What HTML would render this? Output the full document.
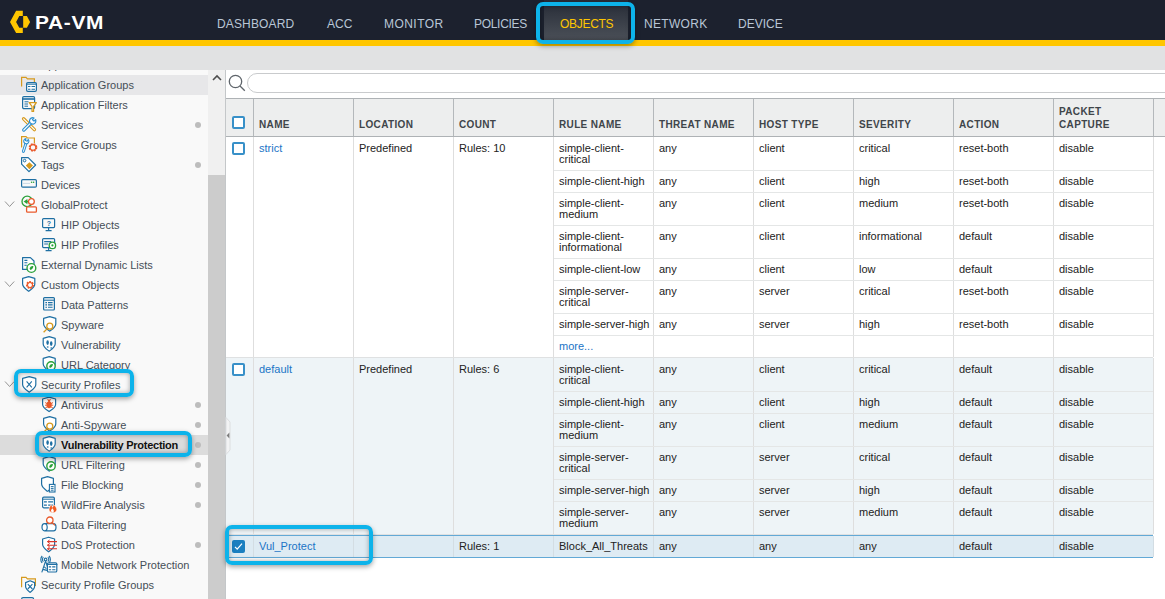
<!DOCTYPE html><html><head><meta charset="utf-8"><style>
*{margin:0;padding:0;box-sizing:border-box}
html,body{width:1165px;height:599px;overflow:hidden;background:#fff;font-family:"Liberation Sans",sans-serif}
.abs{position:absolute}
#hdr{position:absolute;left:0;top:0;width:1165px;height:40px;background:#1c212e}
#ybar{position:absolute;left:0;top:40px;width:1165px;height:6px;background:#ffc600}
#gbar{position:absolute;left:0;top:46px;width:1165px;height:24px;background:#e1e2e3}
.nav{position:absolute;top:17px;font-size:12px;color:#b9c6d6;line-height:14px;white-space:nowrap}
#side{position:absolute;left:0;top:70px;width:208px;height:529px;background:#f9f9f9;overflow:hidden}
.si{position:absolute;left:0;width:208px;height:20px;font-size:11px;color:#454e57;line-height:20px;white-space:nowrap}
.si .t{position:absolute;top:0}
.si svg{position:absolute;top:0;left:0}
.dot{position:absolute;left:195px;top:7px;width:6px;height:6px;border-radius:50%;background:#bdbdbd}
.si .chev{position:absolute;left:4px;top:5px}
#strack{position:absolute;left:208px;top:70px;width:17px;height:529px;background:#f0f0f0}
#sthumb{position:absolute;left:208px;top:175px;width:17px;height:424px;background:#cccccc}
#main{position:absolute;left:225px;top:70px;width:940px;height:529px;background:#fff;border-left:1px solid #c8c8c8}
.cell{position:absolute;font-size:11px;line-height:10.5px;color:#222;white-space:nowrap}
.hd{position:absolute;font-size:10px;font-weight:bold;color:#40454a;line-height:13px;letter-spacing:0.35px;white-space:nowrap}
.lnk{color:#1b74c6}
.vl{position:absolute;width:1px;background:#dedede}
.hl{position:absolute;height:1px;background:#e4e6e6}
.cb{position:absolute;width:13px;height:13px;border:2px solid #3890c8;border-radius:2px;background:#fff}
.hbox{position:absolute;border:4px solid #0db3ea;border-radius:7px;box-shadow:0 2px 5px rgba(0,0,0,.35), inset 0 0 5px rgba(0,0,0,.35)}
</style></head><body>

<div id="hdr"></div><div id="ybar"></div><div id="gbar"></div>
<svg class="abs" style="left:0;top:0" width="40" height="40" viewBox="0 0 40 40">
<path fill="#ffc600" d="M16.1,10.8 L22.8,10.8 L22.8,16.1 L19.3,16.1 L16.1,21.9 L19.3,27.8 L22.8,27.8 L22.8,33 L16.1,33 L10,21.9 Z"/>
<path fill="#ffc600" d="M23.2,16.1 L26.9,16.1 L30.1,21.9 L26.9,27.8 L23.2,27.8 Z"/>
</svg>
<div class="abs" style="left:35px;top:12px;font-size:19px;font-weight:bold;color:#fff;line-height:22px;letter-spacing:0.6px;white-space:nowrap;transform:scaleX(1.1);transform-origin:0 0">PA-VM</div>
<div class="abs" style="left:544px;top:0;width:84px;height:40px;background:linear-gradient(#262b36,#4b5058)"></div>
<div class="nav" style="left:217px;color:#b9c6d6;letter-spacing:0.15px">DASHBOARD</div>
<div class="nav" style="left:327px;color:#b9c6d6;letter-spacing:0px">ACC</div>
<div class="nav" style="left:384px;color:#b9c6d6;letter-spacing:0.45px">MONITOR</div>
<div class="nav" style="left:474px;color:#b9c6d6;letter-spacing:-0.3px">POLICIES</div>
<div class="nav" style="left:560px;color:#ffc600;letter-spacing:-0.3px">OBJECTS</div>
<div class="nav" style="left:644px;color:#b9c6d6;letter-spacing:0.3px">NETWORK</div>
<div class="nav" style="left:738px;color:#b9c6d6;letter-spacing:0px">DEVICE</div>
<div class="hbox" style="left:536px;top:2px;width:99px;height:42px"></div>
<div id="side">
<div class="si" style="top:-15px;">
<span style="position:absolute;left:20px;top:0px;width:18px;height:20px;line-height:0"><svg width="18" height="20" viewBox="0 0 18 20"><rect x="1.6" y="2" width="14.8" height="12.2" rx="1.5" fill="none" stroke="#1e6fa3" stroke-width="1.2"/></svg></span>
<span class="t" style="left:41px;">Application</span>
</div>
<div class="si" style="top:5px;background:#e7e7e9;">
<span style="position:absolute;left:20px;top:0px;width:18px;height:20px;line-height:0"><svg width="18" height="20" viewBox="0 0 18 20"><path d="M1.6,11.5 V2.4 H6 L7.4,3.8 H14.4 V7" fill="none" stroke="#d69a1e" stroke-width="1.2"/><rect x="6.6" y="7.6" width="9.8" height="8.8" rx="1.3" fill="#fff" stroke="#1e6fa3" stroke-width="1.2"/><path d="M6,9.20H17" stroke="#1e6fa3" stroke-width="1"/><path d="M8,11.50h2.42M11.52,11.50H15" stroke="#1e6fa3" stroke-width="1.1"/><path d="M8,14.20h2.42M11.52,14.20H15" stroke="#1e6fa3" stroke-width="1.1"/></svg></span>
<span class="t" style="left:41px;">Application Groups</span>
</div>
<div class="si" style="top:25px;">
<span style="position:absolute;left:20px;top:0px;width:18px;height:20px;line-height:0"><svg width="18" height="20" viewBox="0 0 18 20"><rect x="2.6" y="1.6" width="12" height="12" rx="1.3" fill="none" stroke="#1e6fa3" stroke-width="1.2"/><path d="M3,4h11" stroke="#1e6fa3" stroke-width="1.6"/><path d="M4.5,6.8h4M4.5,9h3.5M4.5,11.2h3.5" stroke="#1e6fa3" stroke-width="1"/><path d="M9.2,7.6 H16.4 L13.6,11.4 V16.4 L12,16.4 V11.4 Z" fill="#fff" stroke="#d69a1e" stroke-width="1.2" stroke-linejoin="round"/></svg></span>
<span class="t" style="left:41px;">Application Filters</span>
</div>
<div class="si" style="top:45px;">
<span style="position:absolute;left:20px;top:0px;width:18px;height:20px;line-height:0"><svg width="18" height="20" viewBox="0 0 18 20"><path d="M3.6,3.8 L14.4,14.6" stroke="#d69a1e" stroke-width="3.4" stroke-linecap="round"/><path d="M3.6,3.8 L14.4,14.6" stroke="#fff" stroke-width="1.2" stroke-linecap="round"/><path d="M3.8,15 L11.6,7.2" stroke="#2a8fd0" stroke-width="3.4" stroke-linecap="round"/><path d="M3.8,15 L11.6,7.2" stroke="#fff" stroke-width="1.2" stroke-linecap="round"/><path d="M15.6,4.6 L14,6.2 L12.4,4.6 L14,3 A3.2,3.2 0 1 0 15.6,4.6 Z" fill="#fff" stroke="#2a8fd0" stroke-width="1.2" stroke-linejoin="round"/></svg></span>
<span class="t" style="left:41px;">Services</span>
<div class="dot"></div>
</div>
<div class="si" style="top:65px;">
<span style="position:absolute;left:20px;top:0px;width:18px;height:20px;line-height:0"><svg width="18" height="20" viewBox="0 0 18 20"><path d="M1.6,12.6 V1.6 H6 L7.4,3 H14.4 V8" fill="none" stroke="#d69a1e" stroke-width="1.2"/><path d="M3.4,16.4 L6.2,7.6" stroke="#2a8fd0" stroke-width="3" stroke-linecap="round"/><path d="M3.4,16.4 L6.2,7.6" stroke="#fff" stroke-width="1" stroke-linecap="round"/><path d="M8.2,4.4 L7.2,6.2 L5.4,5.6 L6,3.6 A2.6,2.6 0 1 0 8.2,4.4 Z" fill="#fff" stroke="#2a8fd0" stroke-width="1.1" stroke-linejoin="round"/><circle cx="13" cy="12.4" r="3.4" fill="none" stroke="#e95a2c" stroke-width="1.8" stroke-dasharray="1.7 1.0"/><circle cx="13" cy="12.4" r="2.8" fill="none" stroke="#e95a2c" stroke-width="1.1"/></svg></span>
<span class="t" style="left:41px;">Service Groups</span>
</div>
<div class="si" style="top:85px;">
<span style="position:absolute;left:20px;top:0px;width:18px;height:20px;line-height:0"><svg width="18" height="20" viewBox="0 0 18 20"><path d="M1.6,2.6 H8.2 L15.6,10 L9,16.6 L1.6,9.2 Z" fill="#fff" stroke="#1e6fa3" stroke-width="1.2" stroke-linejoin="round"/><circle cx="4.6" cy="5.6" r="1.3" fill="none" stroke="#1e6fa3" stroke-width="1"/><path d="M9.4,7.2 L13,10.6 L9.4,14.2 L5.8,10.6 Z" fill="#d69a1e"/></svg></span>
<span class="t" style="left:41px;">Tags</span>
<div class="dot"></div>
</div>
<div class="si" style="top:105px;">
<span style="position:absolute;left:20px;top:0px;width:18px;height:20px;line-height:0"><svg width="18" height="20" viewBox="0 0 18 20"><rect x="1.6" y="4.6" width="14.8" height="7.6" rx="1.2" fill="none" stroke="#1e6fa3" stroke-width="1.2"/><path d="M3,8.4h7" stroke="#c9d9e6" stroke-width="1"/><circle cx="11.6" cy="7.2" r=".8" fill="#2aa13a"/><circle cx="13.6" cy="7.2" r=".8" fill="#2aa13a"/></svg></span>
<span class="t" style="left:41px;">Devices</span>
</div>
<div class="si" style="top:125px;">
<svg class="chev" width="12" height="12" viewBox="0 0 12 12"><path d="M1,1.5l4.6,5l4.6,-5" fill="none" stroke="#959595" stroke-width="1"/></svg>
<span style="position:absolute;left:20px;top:0px;width:18px;height:20px;line-height:0"><svg width="18" height="20" viewBox="0 0 18 20"><circle cx="7.2" cy="6.4" r="5.2" fill="none" stroke="#2aa13a" stroke-width="1.3"/><path d="M3.6,6.6 L7.4,4 V9.2 Z" fill="#2aa13a"/><path d="M6,6.6 H10" stroke="#2aa13a" stroke-width="1.6"/><circle cx="11.4" cy="6.6" r="2.9" fill="#fff" stroke="#e95a2c" stroke-width="1.3"/><rect x="6.6" y="11.8" width="9.8" height="5.4" rx="1" fill="#fff" stroke="#e95a2c" stroke-width="1.3"/></svg></span>
<span class="t" style="left:41px;">GlobalProtect</span>
</div>
<div class="si" style="top:145px;">
<span style="position:absolute;left:40px;top:0px;width:18px;height:20px;line-height:0"><svg width="18" height="20" viewBox="0 0 18 20"><rect x="2.6" y="3.6" width="12" height="9" rx="1" fill="none" stroke="#1e6fa3" stroke-width="1.2"/><path d="M8.6,12.6v2.6M5.6,15.6h6" stroke="#1e6fa3" stroke-width="1.2"/><text x="6.8" y="10.6" font-size="7" font-weight="bold" fill="#1e6fa3" font-family="Liberation Sans">?</text></svg></span>
<span class="t" style="left:61px;">HIP Objects</span>
</div>
<div class="si" style="top:165px;">
<span style="position:absolute;left:40px;top:0px;width:18px;height:20px;line-height:0"><svg width="18" height="20" viewBox="0 0 18 20"><rect x="2.6" y="3.6" width="12" height="9" rx="1" fill="none" stroke="#1e6fa3" stroke-width="1.2"/><path d="M8.6,12.6v2.6M5.6,15.6h6M4.2,6.6h7M4.2,9h4" stroke="#1e6fa3" stroke-width="1.1"/><circle cx="12.4" cy="10.4" r="3.2" fill="#fff" stroke="#2aa13a" stroke-width="1.3"/><circle cx="12.4" cy="10.4" r="1.1" fill="#2aa13a"/></svg></span>
<span class="t" style="left:61px;">HIP Profiles</span>
</div>
<div class="si" style="top:185px;">
<span style="position:absolute;left:20px;top:0px;width:18px;height:20px;line-height:0"><svg width="18" height="20" viewBox="0 0 18 20"><path d="M2.6,2.6 H10.4 L14,6 V14.4 H2.6 Z" fill="#fff" stroke="#1e6fa3" stroke-width="1.2" stroke-linejoin="round"/><path d="M4.4,5.4h3M4.4,7.8h3M4.4,10.2h2.4" stroke="#1e6fa3" stroke-width="1.1"/><circle cx="11.4" cy="13" r="4.4" fill="#fff" stroke="#2aa13a" stroke-width="1.4"/><path d="M9.6,13.6 C10.4,11 12.6,10.6 13.4,11.4 C13,13 12,14.6 10.4,15" fill="#2aa13a"/></svg></span>
<span class="t" style="left:41px;">External Dynamic Lists</span>
</div>
<div class="si" style="top:205px;">
<svg class="chev" width="12" height="12" viewBox="0 0 12 12"><path d="M1,1.5l4.6,5l4.6,-5" fill="none" stroke="#959595" stroke-width="1"/></svg>
<span style="position:absolute;left:20px;top:0px;width:18px;height:20px;line-height:0"><svg width="18" height="20" viewBox="0 0 18 20"><path d="M8.700000000000001,1.6 L14.8,3.4000000000000004 V9.00 C14.8,12.26 10.200000000000001,15.2 8.700000000000001,16.4 C7.200000000000001,15.2 2.6,12.26 2.6,9.00 V3.4000000000000004 Z" fill="#fff" stroke="#1e6fa3" stroke-width="1.2" stroke-linejoin="round"/><circle cx="10" cy="10" r="3.1" fill="none" stroke="#e95a2c" stroke-width="1.8" stroke-dasharray="1.7 1.0"/><circle cx="10" cy="10" r="2.5" fill="none" stroke="#e95a2c" stroke-width="1.1"/></svg></span>
<span class="t" style="left:41px;">Custom Objects</span>
</div>
<div class="si" style="top:225px;">
<span style="position:absolute;left:40px;top:0px;width:18px;height:20px;line-height:0"><svg width="18" height="20" viewBox="0 0 18 20"><rect x="3.6" y="2.6" width="10.8" height="12.4" rx="1" fill="none" stroke="#1e6fa3" stroke-width="1.2"/><path d="M4,5.2h10" stroke="#1e6fa3" stroke-width="1.1"/><path d="M5.4,7.6h1.6M8,7.6h4.6M5.4,9.9h1.6M8,9.9h4.6M5.4,12.2h1.6M8,12.2h4.6" stroke="#1e6fa3" stroke-width="1.1"/></svg></span>
<span class="t" style="left:61px;">Data Patterns</span>
</div>
<div class="si" style="top:245px;">
<span style="position:absolute;left:40px;top:0px;width:18px;height:20px;line-height:0"><svg width="18" height="20" viewBox="0 0 18 20"><path d="M9.700000000000001,1.6 L15.8,3.4000000000000004 V8.90 C15.8,12.11 11.200000000000001,15.0 9.700000000000001,16.2 C8.200000000000001,15.0 3.6,12.11 3.6,8.90 V3.4000000000000004 Z" fill="#fff" stroke="#1e6fa3" stroke-width="1.2" stroke-linejoin="round"/><circle cx="9.8" cy="11.2" r="3" fill="none" stroke="#d69a1e" stroke-width="1.3"/><path d="M7.6,13.4 L3.6,17.2" stroke="#d69a1e" stroke-width="1.3"/></svg></span>
<span class="t" style="left:61px;">Spyware</span>
</div>
<div class="si" style="top:265px;">
<span style="position:absolute;left:40px;top:0px;width:18px;height:20px;line-height:0"><svg width="18" height="20" viewBox="0 0 18 20"><path d="M9.2,1.6 L15.2,3.4000000000000004 V8.90 C15.2,12.11 10.7,15.0 9.2,16.2 C7.699999999999999,15.0 3.2,12.11 3.2,8.90 V3.4000000000000004 Z" fill="#fff" stroke="#1e6fa3" stroke-width="1.2" stroke-linejoin="round"/><ellipse cx="7.6" cy="7.6" rx="1.25" ry="2.3" fill="#1e6fa3"/><ellipse cx="11.2" cy="8.6" rx="1.25" ry="2.3" fill="#1e6fa3"/><rect x="6.9" y="11.4" width="1.6" height="1.2" fill="#1e6fa3"/><rect x="10.5" y="12.4" width="1.6" height="1.2" fill="#1e6fa3"/></svg></span>
<span class="t" style="left:61px;">Vulnerability</span>
</div>
<div class="si" style="top:285px;">
<span style="position:absolute;left:40px;top:0px;width:18px;height:20px;line-height:0"><svg width="18" height="20" viewBox="0 0 18 20"><path d="M9.2,1.6 L15.2,3.4000000000000004 V8.90 C15.2,12.11 10.7,15.0 9.2,16.2 C7.699999999999999,15.0 3.2,12.11 3.2,8.90 V3.4000000000000004 Z" fill="#fff" stroke="#1e6fa3" stroke-width="1.2" stroke-linejoin="round"/><circle cx="11" cy="11" r="4.2" fill="#fff" stroke="#2aa13a" stroke-width="1.4"/><path d="M9.2,11.6 C10,9 12.2,8.6 13,9.4 C12.6,11 11.6,12.6 9.8,13" fill="#2aa13a"/></svg></span>
<span class="t" style="left:61px;">URL Category</span>
</div>
<div class="si" style="top:305px;">
<svg class="chev" width="12" height="12" viewBox="0 0 12 12"><path d="M1,1.5l4.6,5l4.6,-5" fill="none" stroke="#959595" stroke-width="1"/></svg>
<span style="position:absolute;left:20px;top:0px;width:18px;height:20px;line-height:0"><svg width="18" height="20" viewBox="0 0 18 20"><path d="M9.200000000000001,1.6 L15.8,3.4000000000000004 V9.40 C15.8,12.83 10.700000000000001,16.0 9.200000000000001,17.2 C7.700000000000001,16.0 2.6,12.83 2.6,9.40 V3.4000000000000004 Z" fill="#fff" stroke="#1e6fa3" stroke-width="1.2" stroke-linejoin="round"/><path d="M6.6,6.4 L11.8,12.4 M11.8,6.4 L6.6,12.4" stroke="#1e6fa3" stroke-width="1.1"/></svg></span>
<span class="t" style="left:41px;">Security Profiles</span>
</div>
<div class="si" style="top:325px;">
<span style="position:absolute;left:40px;top:0px;width:18px;height:20px;line-height:0"><svg width="18" height="20" viewBox="0 0 18 20"><path d="M9.1,2.2 L15.6,4.0 V9.40 C15.6,12.57 10.6,15.400000000000002 9.1,16.6 C7.6,15.400000000000002 2.6,12.57 2.6,9.40 V4.0 Z" fill="#fff" stroke="#1e6fa3" stroke-width="1.2" stroke-linejoin="round"/><ellipse cx="9.1" cy="9.8" rx="2.6" ry="3.4" fill="#e95a2c"/><circle cx="9.1" cy="5.8" r="1.3" fill="#e95a2c"/><path d="M5.2,7.6l2,1M13,7.6l-2,1M5,10.2h2.4M13.2,10.2h-2.4M5.4,12.8l2,-1M12.8,12.8l-2,-1M7.6,4.2l.8,1M10.6,4.2l-.8,1" stroke="#e95a2c" stroke-width="1"/></svg></span>
<span class="t" style="left:61px;">Antivirus</span>
<div class="dot"></div>
</div>
<div class="si" style="top:345px;">
<span style="position:absolute;left:40px;top:0px;width:18px;height:20px;line-height:0"><svg width="18" height="20" viewBox="0 0 18 20"><path d="M9.700000000000001,1.6 L15.8,3.4000000000000004 V8.90 C15.8,12.11 11.200000000000001,15.0 9.700000000000001,16.2 C8.200000000000001,15.0 3.6,12.11 3.6,8.90 V3.4000000000000004 Z" fill="#fff" stroke="#1e6fa3" stroke-width="1.2" stroke-linejoin="round"/><circle cx="9.8" cy="11.2" r="3" fill="none" stroke="#d69a1e" stroke-width="1.3"/><path d="M7.6,13.4 L3.6,17.2" stroke="#d69a1e" stroke-width="1.3"/></svg></span>
<span class="t" style="left:61px;">Anti-Spyware</span>
<div class="dot"></div>
</div>
<div class="si" style="top:365px;background:#dcdcdc;">
<span style="position:absolute;left:40px;top:0px;width:18px;height:20px;line-height:0"><svg width="18" height="20" viewBox="0 0 18 20"><path d="M9.2,1.6 L15.2,3.4000000000000004 V8.90 C15.2,12.11 10.7,15.0 9.2,16.2 C7.699999999999999,15.0 3.2,12.11 3.2,8.90 V3.4000000000000004 Z" fill="#fff" stroke="#1e6fa3" stroke-width="1.2" stroke-linejoin="round"/><ellipse cx="7.6" cy="7.6" rx="1.25" ry="2.3" fill="#1e6fa3"/><ellipse cx="11.2" cy="8.6" rx="1.25" ry="2.3" fill="#1e6fa3"/><rect x="6.9" y="11.4" width="1.6" height="1.2" fill="#1e6fa3"/><rect x="10.5" y="12.4" width="1.6" height="1.2" fill="#1e6fa3"/></svg></span>
<span class="t" style="left:61px;font-weight:bold;color:#111;letter-spacing:-0.25px;">Vulnerability Protection</span>
<div class="dot"></div>
</div>
<div class="si" style="top:385px;">
<span style="position:absolute;left:40px;top:0px;width:18px;height:20px;line-height:0"><svg width="18" height="20" viewBox="0 0 18 20"><path d="M9.2,1.6 L15.2,3.4000000000000004 V8.90 C15.2,12.11 10.7,15.0 9.2,16.2 C7.699999999999999,15.0 3.2,12.11 3.2,8.90 V3.4000000000000004 Z" fill="#fff" stroke="#1e6fa3" stroke-width="1.2" stroke-linejoin="round"/><circle cx="11" cy="11" r="4.2" fill="#fff" stroke="#2aa13a" stroke-width="1.4"/><path d="M9.2,11.6 C10,9 12.2,8.6 13,9.4 C12.6,11 11.6,12.6 9.8,13" fill="#2aa13a"/></svg></span>
<span class="t" style="left:61px;">URL Filtering</span>
<div class="dot"></div>
</div>
<div class="si" style="top:405px;">
<span style="position:absolute;left:40px;top:0px;width:18px;height:20px;line-height:0"><svg width="18" height="20" viewBox="0 0 18 20"><path d="M7.5,1.6 L13.4,3.4000000000000004 V9.00 C13.4,12.26 9.0,15.2 7.5,16.4 C6.0,15.2 1.6,12.26 1.6,9.00 V3.4000000000000004 Z" fill="#fff" stroke="#1e6fa3" stroke-width="1.2" stroke-linejoin="round"/><rect x="9.4" y="9.4" width="5.6" height="7.6" fill="#fff" stroke="#1e6fa3" stroke-width="1.1"/><path d="M10.8,11.6h2.8M10.8,13.4h2.8M10.8,15.2h2.8" stroke="#1e6fa3" stroke-width="1"/></svg></span>
<span class="t" style="left:61px;">File Blocking</span>
<div class="dot"></div>
</div>
<div class="si" style="top:425px;">
<span style="position:absolute;left:40px;top:0px;width:18px;height:20px;line-height:0"><svg width="18" height="20" viewBox="0 0 18 20"><rect x="2.6" y="2.2" width="11.8" height="10.600000000000001" rx="1.3" fill="#fff" stroke="#1e6fa3" stroke-width="1.2"/><path d="M2,4.20H15" stroke="#1e6fa3" stroke-width="1"/><path d="M4,6.91h2.86M8.16,6.91H13" stroke="#1e6fa3" stroke-width="1.1"/><path d="M4,10.10h2.86M8.16,10.10H13" stroke="#1e6fa3" stroke-width="1.1"/><path d="M13,17.8 C10.4,17.8 9,16.2 9,14.2 C9,12.4 10.4,11.2 11,9.4 C12,10.4 12.4,11.4 12.4,12.4 C13,11.6 13.4,10.6 13.4,9.6 C15.4,11 16.8,12.8 16.8,14.6 C16.8,16.6 15.2,17.8 13,17.8 Z" fill="#f05a22" stroke="#fff" stroke-width=".6"/><path d="M12.8,17.4 C11.6,17.4 11,16.6 11,15.8 C11,14.8 11.8,14.2 12.2,13.2 C13,14 13.8,14.8 13.8,15.8 C13.8,16.8 13.4,17.4 12.8,17.4Z" fill="#fff"/></svg></span>
<span class="t" style="left:61px;">WildFire Analysis</span>
<div class="dot"></div>
</div>
<div class="si" style="top:445px;">
<span style="position:absolute;left:40px;top:0px;width:18px;height:20px;line-height:0"><svg width="18" height="20" viewBox="0 0 18 20"><path d="M4.6,8.6 H13.4 C15,8.6 16,10.4 16,12.2 C16,14 15,15.8 13.4,15.8 H4.6 C3,15.8 2,14 2,12.2 C2,10.4 3,8.6 4.6,8.6 Z M4.6,8.6 C6.2,8.6 7.2,10.4 7.2,12.2 C7.2,14 6.2,15.8 4.6,15.8" fill="#fff" stroke="#1e6fa3" stroke-width="1.2"/><circle cx="9.8" cy="5.2" r="3.2" fill="#fff" stroke="#e95a2c" stroke-width="1.3"/><path d="M12.2,7.6 L15,10.4" stroke="#e95a2c" stroke-width="1.3"/></svg></span>
<span class="t" style="left:61px;">Data Filtering</span>
</div>
<div class="si" style="top:465px;">
<span style="position:absolute;left:40px;top:0px;width:18px;height:20px;line-height:0"><svg width="18" height="20" viewBox="0 0 18 20"><path d="M8.6,2.2 L14.6,4.0 V9.50 C14.6,12.71 10.1,15.600000000000001 8.6,16.8 C7.1,15.600000000000001 2.6,12.71 2.6,9.50 V4.0 Z" fill="#fff" stroke="#1e6fa3" stroke-width="1.2" stroke-linejoin="round"/><path d="M7.6,6.6H17M7.6,10.2H17M7.6,13.8H17" stroke="#d9362b" stroke-width="1.1"/><path d="M9.6,5l-2.2,1.6l2.2,1.6M9.6,8.6l-2.2,1.6l2.2,1.6M9.6,12.2l-2.2,1.6l2.2,1.6" fill="none" stroke="#d9362b" stroke-width="1"/></svg></span>
<span class="t" style="left:61px;">DoS Protection</span>
<div class="dot"></div>
</div>
<div class="si" style="top:485px;">
<span style="position:absolute;left:40px;top:0px;width:18px;height:20px;line-height:0"><svg width="18" height="20" viewBox="0 0 18 20"><circle cx="5.6" cy="4.4" r="1.3" fill="none" stroke="#1e6fa3" stroke-width="1.1"/><path d="M3.4,6.6 A3,3 0 0 1 3.4,2.2 M7.8,2.2 A3,3 0 0 1 7.8,6.6 M2.2,7.8 A4.8,4.8 0 0 1 2.2,1 M9,1 A4.8,4.8 0 0 1 9,7.8" fill="none" stroke="#1e6fa3" stroke-width="1.1"/><path d="M5.6,6 L1.8,17.4 M5.6,6 L7.4,11.6 M3.6,11.4 L6.4,13.6 M2.8,14.4 L7,15.4" fill="none" stroke="#1e6fa3" stroke-width="1.1"/><rect x="7.3999999999999995" y="7.8" width="9.399999999999999" height="9.200000000000003" rx="1.3" fill="#fff" stroke="#1e6fa3" stroke-width="1.2"/><path d="M6.8,9.49H17.4" stroke="#1e6fa3" stroke-width="1"/><path d="M8.8,11.88h2.33M12.19,11.88H15.399999999999999" stroke="#1e6fa3" stroke-width="1.1"/><path d="M8.8,14.69h2.33M12.19,14.69H15.399999999999999" stroke="#1e6fa3" stroke-width="1.1"/></svg></span>
<span class="t" style="left:61px;">Mobile Network Protection</span>
</div>
<div class="si" style="top:505px;">
<span style="position:absolute;left:20px;top:0px;width:18px;height:20px;line-height:0"><svg width="18" height="20" viewBox="0 0 18 20"><path d="M1.6,12.2 V2.4 H6 L7.4,3.8 H15.4 V11" fill="none" stroke="#d69a1e" stroke-width="1.2"/><path d="M10.1,5.8 L14.6,7.6 V11.60 C14.6,14.15 11.6,16.2 10.1,17.4 C8.6,16.2 5.6,14.15 5.6,11.60 V7.6 Z" fill="#fff" stroke="#1e6fa3" stroke-width="1.2" stroke-linejoin="round"/><path d="M7.8,9.2 L12.4,14 M12.4,9.2 L7.8,14" stroke="#1e6fa3" stroke-width="1.1"/></svg></span>
<span class="t" style="left:41px;">Security Profile Groups</span>
</div>
<div class="si" style="top:525px;">
<span style="position:absolute;left:20px;top:0px;width:18px;height:20px;line-height:0"><svg width="18" height="20" viewBox="0 0 18 20"><rect x="1.6" y="2.6" width="12" height="14" rx="1.5" fill="none" stroke="#1e6fa3" stroke-width="1.2"/></svg></span>
<span class="t" style="left:41px;">Log Forwarding</span>
</div>
</div>
<div id="strack"></div><div id="sthumb"></div>
<svg class="abs" style="left:210px;top:72px" width="14" height="12" viewBox="0 0 14 12"><path d="M3,8l4,-4l4,4" fill="none" stroke="#4e4e4e" stroke-width="1.6"/></svg>
<div class="abs" style="left:225px;top:70px;width:940px;height:529px;background:#fff"></div>
<div class="abs" style="left:225px;top:70px;width:1px;height:529px;background:#c4c7c9"></div>
<svg class="abs" style="left:226px;top:72px" width="22" height="22" viewBox="0 0 22 22"><circle cx="9.5" cy="9.5" r="6.2" fill="none" stroke="#5f656b" stroke-width="1.3"/><path d="M14,14l4.8,4.8" stroke="#5f656b" stroke-width="1.3"/></svg>
<div class="abs" style="left:247px;top:73px;width:940px;height:20px;border:1px solid #c9cbcd;border-radius:10px;background:#fff"></div>
<div class="abs" style="left:226px;top:98px;width:939px;height:39px;background:#edeeee;border-top:1px solid #aeb2b5;border-bottom:1px solid #aeb2b5"></div>
<div class="abs" style="left:253px;top:99px;width:1px;height:37px;background:#b4b8bb"></div>
<div class="abs" style="left:353px;top:99px;width:1px;height:37px;background:#b4b8bb"></div>
<div class="abs" style="left:453px;top:99px;width:1px;height:37px;background:#b4b8bb"></div>
<div class="abs" style="left:553px;top:99px;width:1px;height:37px;background:#b4b8bb"></div>
<div class="abs" style="left:653px;top:99px;width:1px;height:37px;background:#b4b8bb"></div>
<div class="abs" style="left:753px;top:99px;width:1px;height:37px;background:#b4b8bb"></div>
<div class="abs" style="left:853px;top:99px;width:1px;height:37px;background:#b4b8bb"></div>
<div class="abs" style="left:953px;top:99px;width:1px;height:37px;background:#b4b8bb"></div>
<div class="abs" style="left:1053px;top:99px;width:1px;height:37px;background:#b4b8bb"></div>
<div class="abs" style="left:1153px;top:99px;width:1px;height:37px;background:#b4b8bb"></div>
<div class="cb" style="left:232px;top:116px"></div>
<div class="hd" style="left:259px;top:118px">NAME</div>
<div class="hd" style="left:359px;top:118px">LOCATION</div>
<div class="hd" style="left:459px;top:118px">COUNT</div>
<div class="hd" style="left:559px;top:118px">RULE NAME</div>
<div class="hd" style="left:659px;top:118px">THREAT NAME</div>
<div class="hd" style="left:759px;top:118px">HOST TYPE</div>
<div class="hd" style="left:859px;top:118px">SEVERITY</div>
<div class="hd" style="left:959px;top:118px">ACTION</div>
<div class="hd" style="left:1059px;top:105px">PACKET<br>CAPTURE</div>
<div class="abs" style="left:226px;top:137px;width:927px;height:220px;background:#fff"></div>
<div class="vl" style="left:253px;top:137px;height:220px"></div>
<div class="vl" style="left:353px;top:137px;height:220px"></div>
<div class="vl" style="left:453px;top:137px;height:220px"></div>
<div class="vl" style="left:553px;top:137px;height:220px"></div>
<div class="vl" style="left:653px;top:137px;height:220px"></div>
<div class="vl" style="left:753px;top:137px;height:220px"></div>
<div class="vl" style="left:853px;top:137px;height:220px"></div>
<div class="vl" style="left:953px;top:137px;height:220px"></div>
<div class="vl" style="left:1053px;top:137px;height:220px"></div>
<div class="vl" style="left:1153px;top:137px;height:220px"></div>
<div class="cb" style="left:232px;top:142px"></div>
<div class="cell lnk" style="left:259px;top:143px">strict</div>
<div class="cell" style="left:359px;top:143px">Predefined</div>
<div class="cell" style="left:459px;top:143px">Rules: 10</div>
<div class="cell" style="left:559px;top:143px">simple-client-<br>critical</div>
<div class="cell" style="left:659px;top:143px">any</div>
<div class="cell" style="left:759px;top:143px">client</div>
<div class="cell" style="left:859px;top:143px">critical</div>
<div class="cell" style="left:959px;top:143px">reset-both</div>
<div class="cell" style="left:1059px;top:143px">disable</div>
<div class="hl" style="left:554px;top:170px;width:599px"></div>
<div class="cell" style="left:559px;top:176px">simple-client-high</div>
<div class="cell" style="left:659px;top:176px">any</div>
<div class="cell" style="left:759px;top:176px">client</div>
<div class="cell" style="left:859px;top:176px">high</div>
<div class="cell" style="left:959px;top:176px">reset-both</div>
<div class="cell" style="left:1059px;top:176px">disable</div>
<div class="hl" style="left:554px;top:192px;width:599px"></div>
<div class="cell" style="left:559px;top:198px">simple-client-<br>medium</div>
<div class="cell" style="left:659px;top:198px">any</div>
<div class="cell" style="left:759px;top:198px">client</div>
<div class="cell" style="left:859px;top:198px">medium</div>
<div class="cell" style="left:959px;top:198px">reset-both</div>
<div class="cell" style="left:1059px;top:198px">disable</div>
<div class="hl" style="left:554px;top:225px;width:599px"></div>
<div class="cell" style="left:559px;top:231px">simple-client-<br>informational</div>
<div class="cell" style="left:659px;top:231px">any</div>
<div class="cell" style="left:759px;top:231px">client</div>
<div class="cell" style="left:859px;top:231px">informational</div>
<div class="cell" style="left:959px;top:231px">default</div>
<div class="cell" style="left:1059px;top:231px">disable</div>
<div class="hl" style="left:554px;top:258px;width:599px"></div>
<div class="cell" style="left:559px;top:264px">simple-client-low</div>
<div class="cell" style="left:659px;top:264px">any</div>
<div class="cell" style="left:759px;top:264px">client</div>
<div class="cell" style="left:859px;top:264px">low</div>
<div class="cell" style="left:959px;top:264px">default</div>
<div class="cell" style="left:1059px;top:264px">disable</div>
<div class="hl" style="left:554px;top:280px;width:599px"></div>
<div class="cell" style="left:559px;top:286px">simple-server-<br>critical</div>
<div class="cell" style="left:659px;top:286px">any</div>
<div class="cell" style="left:759px;top:286px">server</div>
<div class="cell" style="left:859px;top:286px">critical</div>
<div class="cell" style="left:959px;top:286px">reset-both</div>
<div class="cell" style="left:1059px;top:286px">disable</div>
<div class="hl" style="left:554px;top:313px;width:599px"></div>
<div class="cell" style="left:559px;top:319px">simple-server-high</div>
<div class="cell" style="left:659px;top:319px">any</div>
<div class="cell" style="left:759px;top:319px">server</div>
<div class="cell" style="left:859px;top:319px">high</div>
<div class="cell" style="left:959px;top:319px">reset-both</div>
<div class="cell" style="left:1059px;top:319px">disable</div>
<div class="hl" style="left:554px;top:335px;width:599px"></div>
<div class="cell lnk" style="left:559px;top:341px">more...</div>
<div class="abs" style="left:226px;top:357px;width:927px;height:1px;background:#dfe1e2"></div>
<div class="abs" style="left:226px;top:358px;width:927px;height:176px;background:#eef4f7"></div>
<div class="vl" style="left:253px;top:358px;height:176px"></div>
<div class="vl" style="left:353px;top:358px;height:176px"></div>
<div class="vl" style="left:453px;top:358px;height:176px"></div>
<div class="vl" style="left:553px;top:358px;height:176px"></div>
<div class="vl" style="left:653px;top:358px;height:176px"></div>
<div class="vl" style="left:753px;top:358px;height:176px"></div>
<div class="vl" style="left:853px;top:358px;height:176px"></div>
<div class="vl" style="left:953px;top:358px;height:176px"></div>
<div class="vl" style="left:1053px;top:358px;height:176px"></div>
<div class="vl" style="left:1153px;top:358px;height:176px"></div>
<div class="cb" style="left:232px;top:363px"></div>
<div class="cell lnk" style="left:259px;top:364px">default</div>
<div class="cell" style="left:359px;top:364px">Predefined</div>
<div class="cell" style="left:459px;top:364px">Rules: 6</div>
<div class="cell" style="left:559px;top:364px">simple-client-<br>critical</div>
<div class="cell" style="left:659px;top:364px">any</div>
<div class="cell" style="left:759px;top:364px">client</div>
<div class="cell" style="left:859px;top:364px">critical</div>
<div class="cell" style="left:959px;top:364px">default</div>
<div class="cell" style="left:1059px;top:364px">disable</div>
<div class="hl" style="left:554px;top:391px;width:599px"></div>
<div class="cell" style="left:559px;top:397px">simple-client-high</div>
<div class="cell" style="left:659px;top:397px">any</div>
<div class="cell" style="left:759px;top:397px">client</div>
<div class="cell" style="left:859px;top:397px">high</div>
<div class="cell" style="left:959px;top:397px">default</div>
<div class="cell" style="left:1059px;top:397px">disable</div>
<div class="hl" style="left:554px;top:413px;width:599px"></div>
<div class="cell" style="left:559px;top:419px">simple-client-<br>medium</div>
<div class="cell" style="left:659px;top:419px">any</div>
<div class="cell" style="left:759px;top:419px">client</div>
<div class="cell" style="left:859px;top:419px">medium</div>
<div class="cell" style="left:959px;top:419px">default</div>
<div class="cell" style="left:1059px;top:419px">disable</div>
<div class="hl" style="left:554px;top:446px;width:599px"></div>
<div class="cell" style="left:559px;top:452px">simple-server-<br>critical</div>
<div class="cell" style="left:659px;top:452px">any</div>
<div class="cell" style="left:759px;top:452px">server</div>
<div class="cell" style="left:859px;top:452px">critical</div>
<div class="cell" style="left:959px;top:452px">default</div>
<div class="cell" style="left:1059px;top:452px">disable</div>
<div class="hl" style="left:554px;top:479px;width:599px"></div>
<div class="cell" style="left:559px;top:485px">simple-server-high</div>
<div class="cell" style="left:659px;top:485px">any</div>
<div class="cell" style="left:759px;top:485px">server</div>
<div class="cell" style="left:859px;top:485px">high</div>
<div class="cell" style="left:959px;top:485px">default</div>
<div class="cell" style="left:1059px;top:485px">disable</div>
<div class="hl" style="left:554px;top:501px;width:599px"></div>
<div class="cell" style="left:559px;top:507px">simple-server-<br>medium</div>
<div class="cell" style="left:659px;top:507px">any</div>
<div class="cell" style="left:759px;top:507px">server</div>
<div class="cell" style="left:859px;top:507px">medium</div>
<div class="cell" style="left:959px;top:507px">default</div>
<div class="cell" style="left:1059px;top:507px">disable</div>
<div class="abs" style="left:226px;top:534px;width:927px;height:1px;background:#dfe1e2"></div>
<div class="abs" style="left:226px;top:535px;width:927px;height:23px;background:#deebf3;border-top:1px solid #62a9d6;border-bottom:1px solid #62a9d6"></div>
<div class="vl" style="left:253px;top:536px;height:21px;background:#d3dde3"></div>
<div class="vl" style="left:353px;top:536px;height:21px;background:#d3dde3"></div>
<div class="vl" style="left:453px;top:536px;height:21px;background:#d3dde3"></div>
<div class="vl" style="left:553px;top:536px;height:21px;background:#d3dde3"></div>
<div class="vl" style="left:653px;top:536px;height:21px;background:#d3dde3"></div>
<div class="vl" style="left:753px;top:536px;height:21px;background:#d3dde3"></div>
<div class="vl" style="left:853px;top:536px;height:21px;background:#d3dde3"></div>
<div class="vl" style="left:953px;top:536px;height:21px;background:#d3dde3"></div>
<div class="vl" style="left:1053px;top:536px;height:21px;background:#d3dde3"></div>
<div class="vl" style="left:1153px;top:536px;height:21px;background:#d3dde3"></div>
<div class="abs" style="left:232px;top:540px;width:13px;height:13px;background:#1b7fc0;border-radius:2px"></div>
<svg class="abs" style="left:232px;top:540px" width="13" height="13" viewBox="0 0 13 13"><path d="M3,6.8l2.2,2.4l4.8,-5.6" fill="none" stroke="#fff" stroke-width="1.2"/></svg>
<div class="cell lnk" style="left:259px;top:541px">Vul_Protect</div>
<div class="cell" style="left:359px;top:541px"></div>
<div class="cell" style="left:459px;top:541px">Rules: 1</div>
<div class="cell" style="left:559px;top:541px">Block_All_Threats</div>
<div class="cell" style="left:659px;top:541px">any</div>
<div class="cell" style="left:759px;top:541px">any</div>
<div class="cell" style="left:859px;top:541px">any</div>
<div class="cell" style="left:959px;top:541px">default</div>
<div class="cell" style="left:1059px;top:541px">disable</div>
<svg class="abs" style="left:225px;top:416px" width="8" height="40" viewBox="0 0 8 40"><path d="M1,1.5 L5,6 V34 L1,38.5 Z" fill="#f2f3f4" stroke="#dcdee0" stroke-width="1"/><path d="M1.6,19.5 L4.4,16.6 V22.4 Z" fill="#7d7d7d"/></svg>
<div class="hbox" style="left:225px;top:525px;width:148px;height:40px"></div>
<div class="hbox" style="left:14px;top:369px;width:120px;height:28px"></div>
<div class="hbox" style="left:35px;top:431px;width:157px;height:26px"></div>
</body></html>
